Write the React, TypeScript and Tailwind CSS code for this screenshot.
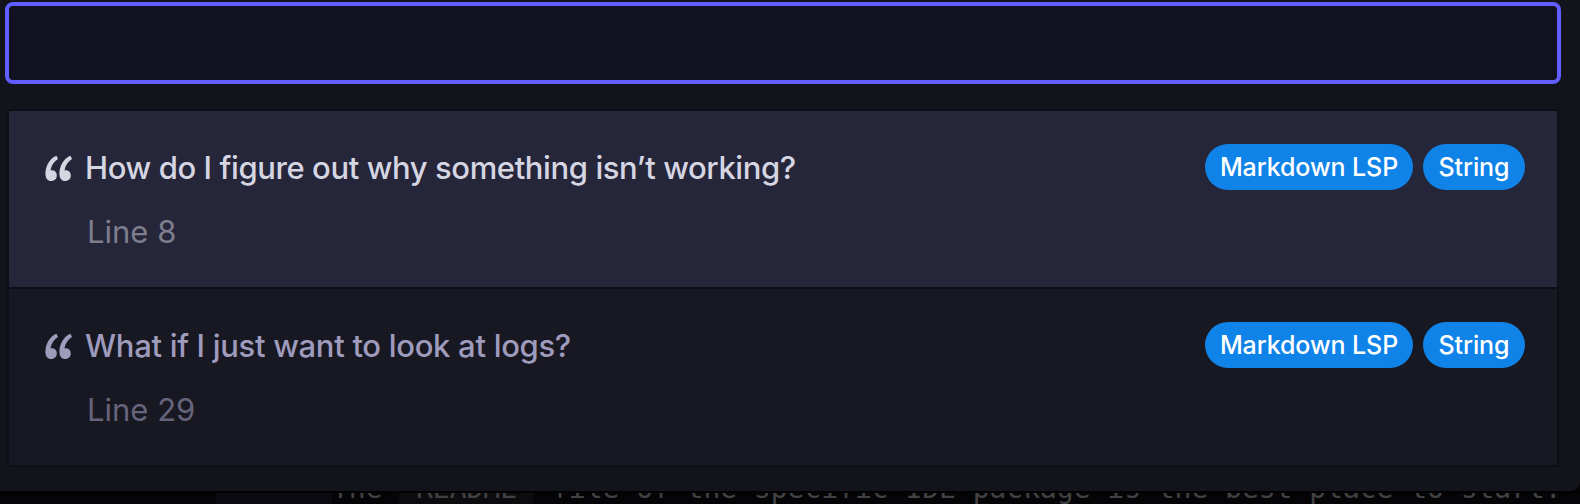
type Result = { title: string; line: number; selected: boolean; tracking: string };

const results: Result[] = [
  { title: "How do I figure out why something isn’t working?", line: 8, selected: true, tracking: "tracking-[-0.4px]" },
  { title: "What if I just want to look at logs?", line: 29, selected: false, tracking: "tracking-[-0.3px]" },
];

function QuoteIcon() {
  return (
    <svg width="28" height="28" viewBox="0 0 28 28" fill="currentColor" className="mt-0.5 block shrink-0">
      <path d="M11.5 .8C5.300 3.100 .4 10.500 .4 18.700C.4 23.200 2.600 26 6.200 26C9.500 26 11.800 23.700 11.800 20.500C11.800 17.500 9.800 15.300 7 15.300C6.400 15.300 5.900 15.400 5.500 15.600C6.200 10.600 8.700 6.700 13 4Z" />
      <path d="M25.500 .8C19.300 3.100 14.400 10.500 14.400 18.700C14.400 23.200 16.600 26 20.200 26C23.500 26 25.800 23.700 25.800 20.500C25.800 17.500 23.800 15.300 21 15.300C20.400 15.300 19.900 15.400 19.500 15.600C20.200 10.600 22.700 6.700 27 4Z" />
    </svg>
  );
}

function ResultRow({ title, line, selected, tracking }: Result) {
  return (
    <li
      className={
        selected
          ? "flex h-[178px] items-start justify-between border-b-2 border-[#0e0e16] bg-[#26263a] pr-8 pl-9 pt-8 text-[#d6d5e2]"
          : "flex h-[178px] items-start justify-between border-b-2 border-[#0e0e16] bg-[#181822] pr-8 pl-9 pt-8 text-[#9f9bbd]"
      }
    >
      <div className="pt-px">
        <div className="flex h-12 items-center">
          <QuoteIcon />
          <span className={`ml-3 whitespace-nowrap text-[31px] leading-[48px] font-[450] ${tracking}`}>{title}</span>
        </div>
        <div className={selected ? "mt-4 pl-[42px] text-[31px] leading-[48px] text-[#7f7e8e]" : "mt-4 pl-[42px] text-[31px] leading-[48px] text-[#66647c]"}>
          Line {line}
        </div>
      </div>
      <div className="mt-px flex gap-2.5 text-[25px] leading-[46px] font-[450] tracking-[-0.1px] text-white">
        <span className="h-[46px] w-[208px] rounded-full bg-[#1083e8] text-center whitespace-nowrap">Markdown LSP</span>
        <span className="h-[46px] w-[102px] rounded-full bg-[#1083e8] text-center whitespace-nowrap">String</span>
      </div>
    </li>
  );
}

export default function App() {
  return (
    <div className="h-[504px] w-[1580px] overflow-hidden bg-[#050507] font-['Inter','Liberation_Sans',sans-serif]">
      <div className="h-[491px] rounded-br-[10px] bg-[#13131c] pt-0.5">
        <input
          type="text"
          aria-label="Search"
          className="ml-[5px] block h-[82px] w-[1556px] rounded-lg border-4 border-[#605eff] bg-[#121121] px-6 text-[31px] text-white outline-none"
        />
        <ul className="mt-[25px] ml-[7px] w-[1552px] border-2 border-b-0 border-[#0e0e16]">
          {results.map((r) => (
            <ResultRow key={r.line} {...r} />
          ))}
        </ul>
      </div>
      <div className="flex h-[13px] overflow-hidden border-t-2 border-[#020203] font-['DejaVu_Sans_Mono',monospace] text-[28px] text-[#424244]">
        <div className="w-[216px] shrink-0" />
        <div className="w-[116px] shrink-0 bg-[#0b0a10]" />
        <div className="-mt-[21px] flex h-[34px] shrink-0 leading-[34px] whitespace-pre">
          <span className="w-[67px]">The</span>
          <span className="w-[135px] rounded-md bg-[#0c0c0e] text-center">README</span>
          <span className="pl-[18px] tracking-[-0.03px]">file of the specific IDE package is the best place to start.</span>
        </div>
      </div>
    </div>
  );
}
